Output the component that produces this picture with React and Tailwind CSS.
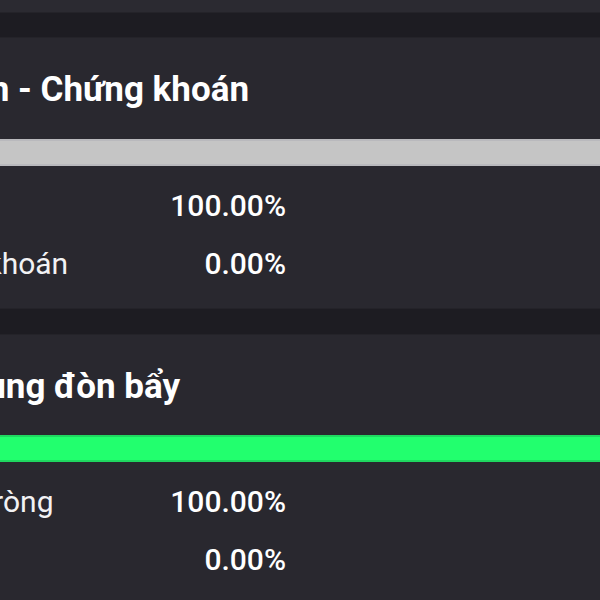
export default function App() {
  const font = { fontFamily: 'Roboto, "Noto Sans", sans-serif' };
  const Row = ({ label, value, labelShift }) => (
    <div className="h-[58px] flex items-center relative">
      <span className={`absolute whitespace-nowrap text-[30px] text-[#f2f2f4] ${labelShift}`}>{label}</span>
      <span className="absolute right-[314px] whitespace-nowrap text-[30px] font-medium text-white">{value}</span>
    </div>
  );
  return (
    <div className="w-[600px] h-[600px] overflow-hidden bg-[#29282f]" style={font}>
      <div className="h-[12px] bg-[#2b2a31]" />
      <div className="h-[26px] bg-[#1d1c22] border-y border-[#242329]" />
      <div className="h-[101px] pt-[4px] flex items-center">
        <div className="w-[249px] flex justify-end whitespace-nowrap">
          <span className="text-[35px] font-bold text-white">Tiền - Chứng khoán</span>
        </div>
      </div>
      <div className="h-[27px] bg-[#c5c5c5] border-y-2 border-[#b9b9bd]" />
      <div className="pt-[10px] h-[142px]">
        <Row label="Tiền" value="100.00%" labelShift="left-[-109px]" />
        <Row label="Chứng khoán" value="0.00%" labelShift="left-[-109px]" />
      </div>
      <div className="h-[27px] bg-[#1d1c22] border-y border-[#242329]" />
      <div className="h-[100px] pt-[4px] flex items-center">
        <div className="w-[180px] flex justify-end whitespace-nowrap">
          <span className="text-[35px] font-bold text-white">Sử dụng đòn bẩy</span>
        </div>
      </div>
      <div className="h-[27px] bg-[#22ff6e] border-y-2 border-[#1fd860]" />
      <div className="pt-[10px]">
        <Row label="Tài sản ròng" value="100.00%" labelShift="left-[-110px]" />
        <Row label="Nợ vay" value="0.00%" labelShift="left-[-110px]" />
      </div>
    </div>
  );
}
